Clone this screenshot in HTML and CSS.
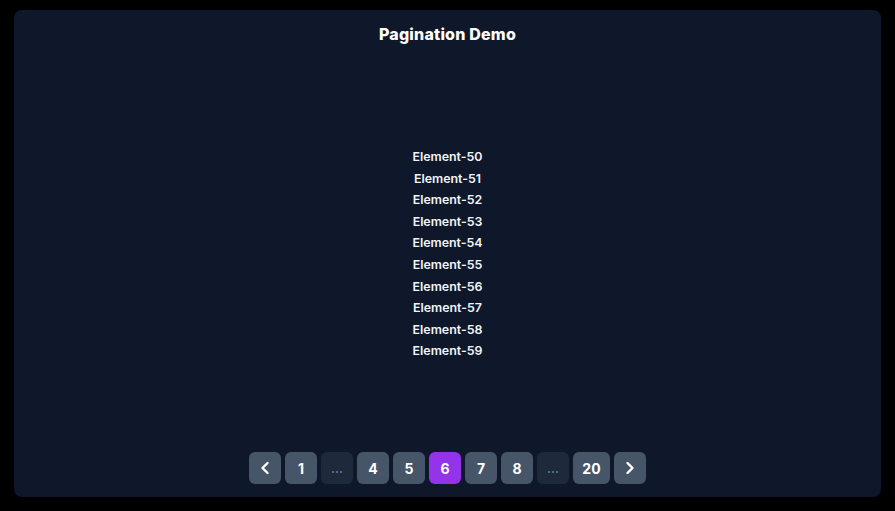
FILE: index.html
```html
<!DOCTYPE html>
<html lang="en">
<head>
<meta charset="utf-8">
<title>Pagination Demo</title>
<link rel="stylesheet" href="styles.css">
</head>
<body>
<main class="card">
  <h1 class="title">Pagination Demo</h1>
  <ul class="list">
    <li>Element-50</li>
    <li>Element-51</li>
    <li>Element-52</li>
    <li>Element-53</li>
    <li>Element-54</li>
    <li>Element-55</li>
    <li>Element-56</li>
    <li>Element-57</li>
    <li>Element-58</li>
    <li>Element-59</li>
  </ul>
  <nav class="pager">
    <button class="pg-btn" aria-label="Previous">
      <svg width="14" height="14" viewBox="0 0 14 14"><path d="M9.5 2 L4.5 7 L9.5 12" fill="none" stroke="#fff" stroke-width="2.4" stroke-linecap="round" stroke-linejoin="round"/></svg>
    </button>
    <button class="pg-btn">1</button>
    <span class="pg-btn pg-ellipsis">...</span>
    <button class="pg-btn">4</button>
    <button class="pg-btn">5</button>
    <button class="pg-btn pg-active">6</button>
    <button class="pg-btn">7</button>
    <button class="pg-btn">8</button>
    <span class="pg-btn pg-ellipsis">...</span>
    <button class="pg-btn pg-wide">20</button>
    <button class="pg-btn" aria-label="Next">
      <svg width="14" height="14" viewBox="0 0 14 14"><path d="M4.5 2 L9.5 7 L4.5 12" fill="none" stroke="#fff" stroke-width="2.4" stroke-linecap="round" stroke-linejoin="round"/></svg>
    </button>
  </nav>
</main>
</body>
</html>
```

FILE: styles.css
```css
* { box-sizing: border-box; }
html, body { height: 100%; }
body {
  margin: 0;
  padding: 10px 14px 14px;
  background: #000;
  font-family: Inter, "Noto Sans", sans-serif;
  color: #f1f5f9;
}
.card {
  height: 100%;
  background: #0f172a;
  border-radius: 8px;
  display: flex;
  flex-direction: column;
  align-items: center;
  padding: 14px 16px 13px;
}
.title {
  margin: 0;
  font-size: 16px;
  line-height: 20px;
  font-weight: 800;
  letter-spacing: 0.2px;
  color: #ffffff;
  padding-bottom: 24px;
}
.list {
  list-style: none;
  margin: 0;
  padding: 0;
  flex: 1;
  display: flex;
  flex-direction: column;
  justify-content: center;
  align-items: center;
}
.list li {
  font-size: 12.4px;
  font-weight: 600;
  line-height: 21.55px;
  color: #f1f5f9;
}
.pager {
  display: flex;
  gap: 4px;
  padding-top: 12px;
}
.pg-btn {
  min-width: 32px;
  height: 32px;
  padding: 0 8px;
  border: none;
  border-radius: 6px;
  background: #475569;
  color: #fff;
  font-family: inherit;
  font-size: 14px;
  font-weight: 700;
  display: flex;
  align-items: center;
  justify-content: center;
}
.pg-wide { padding: 0 9px; min-width: 37px; }
.pg-btn svg { display: block; }
.pg-active { background: #9333ea; }
.pg-ellipsis {
  background: #1e293b;
  color: #64748b;
  font-size: 12px;
}
```
